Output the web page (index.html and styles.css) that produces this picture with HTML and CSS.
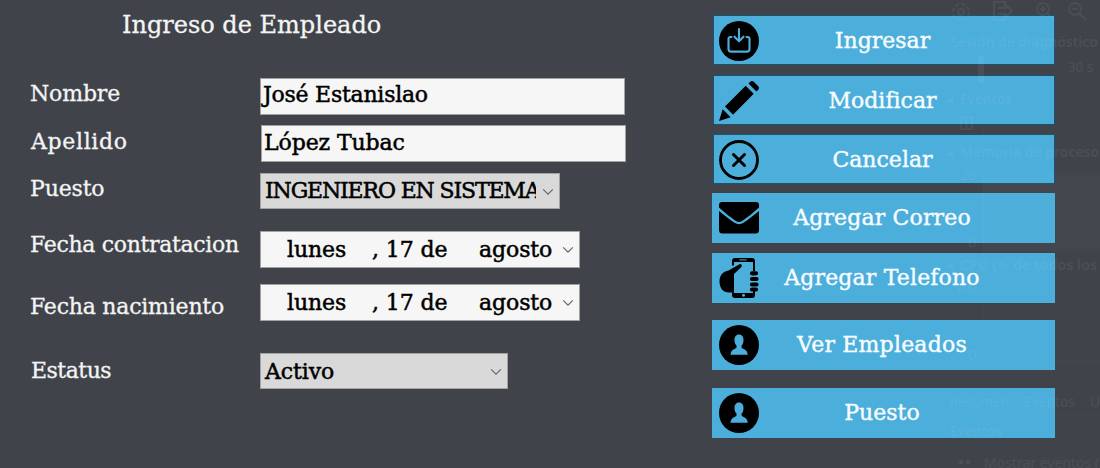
FILE: index.html
```html
<!DOCTYPE html>
<html lang="es">
<head>
<meta charset="utf-8">
<title>Ingreso de Empleado</title>
<link rel="stylesheet" href="styles.css">
</head>
<body>
<svg width="0" height="0" class="defs">
  <symbol id="chev" viewBox="0 0 12 8"><path d="M1.2 1.3 6 6.1 10.8 1.3" fill="none" stroke="#666" stroke-width="1.2"/></symbol>
  <symbol id="user" viewBox="0 0 40 40"><circle cx="20" cy="20" r="20"/><path d="M20 9.500c3 0 4.700 2.500 4.500 5.900c-.1 2.300-.8 4.100-1.900 5.200v2.200c1.500 1.800 5.700 1.300 6.200 7H11.500c.5-5.700 4.500-5.200 6-7v-2.200c-1.100-1.100-1.900-2.900-2-5.200C15.300 12 17 9.500 20 9.500z" fill="#4caedb"/></symbol>
</svg>
<main class="window">
  <form class="form">
    <h1 class="title">Ingreso de Empleado</h1>
    <div class="row nombre"><label>Nombre</label><div class="field"><span>José Estanislao</span></div></div>
    <div class="row apellido"><label>Apellido</label><div class="field"><span>López Tubac</span></div></div>
    <div class="row puesto"><label>Puesto</label><div class="field select"><span class="clip">INGENIERO EN SISTEMA</span><svg class="chev"><use href="#chev"/></svg></div></div>
    <div class="row contrato"><label>Fecha contratacion</label><div class="field date"><span class="day">lunes</span><span class="num">, 17 de</span><span class="month">agosto</span><svg class="chev"><use href="#chev"/></svg></div></div>
    <div class="row nacimiento"><label>Fecha nacimiento</label><div class="field date"><span class="day">lunes</span><span class="num">, 17 de</span><span class="month">agosto</span><svg class="chev"><use href="#chev"/></svg></div></div>
    <div class="row estatus"><label>Estatus</label><div class="field select"><span>Activo</span><svg class="chev"><use href="#chev"/></svg></div></div>
  </form>
  <nav class="actions">
    <button class="btn edged b1"><svg class="icon" viewBox="0 0 40 40"><circle cx="20" cy="20" r="20"/><g fill="none" stroke="#4caedb" stroke-width="2.100" stroke-linecap="round" stroke-linejoin="round"><path d="M12.500 16h-1c-1.300 0-2 .8-2 2v10c0 1.700.9 2.600 2.500 2.600h16c1.600 0 2.500-.9 2.500-2.600V18c0-1.200-.7-2-2-2h-1M20 8v12M15.500 15.700 20 20.200l4.500-4.500"/></g></svg><span>Ingresar</span></button>
    <button class="btn edged b2"><svg class="icon" viewBox="0 0 40 40"><path d="M0 40 3.700 28.300 11.700 36.300zM6 25.500 26.700 4.800 34.700 12.800 14 33.700zM29.500 2.500 31 1c1.300-1.300 2.700-1.300 4 0l4 4c1.300 1.300 1.300 2.700 0 4l-1.600 1.600z"/></svg><span>Modificar</span></button>
    <button class="btn edged b3"><svg class="icon" viewBox="0 0 40 40"><circle cx="20" cy="20" r="18.500" fill="none" stroke="#000" stroke-width="2.800"/><path d="m14.500 14.500 11 11m0-11-11 11" stroke="#000" stroke-width="3" stroke-linecap="round"/></svg><span>Cancelar</span></button>
    <button class="btn b4"><svg class="icon" viewBox="0 0 40 40"><path d="M3 4h34c2 0 3 1.200 3 3v2.500C34 15 27 20.500 23 23c-2 1.200-4 1.200-6 0C13 20.500 6 15 0 9.500V7c0-1.800 1-3 3-3zM0 13c5.500 4.500 10.500 8.500 15.500 11.800 3 1.900 6 1.900 9 0C29.500 21.500 34.500 17.500 40 13v19c0 2.400-1.100 3.500-3.500 3.500h-33C1.100 35.500 0 34.400 0 32z"/></svg><span>Agregar Correo</span></button>
    <button class="btn b5"><svg class="icon" viewBox="0 0 40 40"><path d="M16 0h17c2 0 3 1.100 3 3v10h-2V4H15v3.500h-2V3c0-1.900 1-3 3-3zM13 33.500h2v1.500h19v-2h2v4c0 1.900-1 3-3 3H16c-2 0-3-1.100-3-3z"/><path d="M21 6c1.700 0 2.500 2 1.200 3.300L15 16v18.500H10C4 34.500.5 30 .5 23.500.5 17 4 13.500 9.500 12.500z"/><path d="M33 15.300h4M33 21h4.500M33 26.500h4.500M33 31.500h4" stroke="#000" stroke-width="4.200" stroke-linecap="round"/><path d="M20.500 1.900h7" stroke="#4caedb" stroke-width="1"/><circle cx="24.500" cy="37.300" r="1.500" fill="#4caedb"/></svg><span>Agregar Telefono</span></button>
    <button class="btn b6"><svg class="icon"><use href="#user"/></svg><span>Ver Empleados</span></button>
    <button class="btn b7"><svg class="icon"><use href="#user"/></svg><span>Puesto</span></button>
  </nav>
</main>
<!-- translucent diagnostics panel over the right edge -->
<svg class="ghost" viewBox="930 0 170 468">
  <g fill="none" stroke="#fff" stroke-width="2">
    <circle cx="961" cy="12" r="3"/><circle cx="961" cy="12" r="8" stroke-dasharray="4 2.280"/>
    <path d="M1005 7V2h-11v18h11v-5M998 8h8v-3l6 6-6 6v-3h-8"/>
    <circle cx="1043" cy="9" r="6"/><path d="m1047 13 7 7M1043 6v6M1040 9h6"/><circle cx="1075" cy="9" r="6"/><path d="m1079 13 7 7M1072 9h6"/>
    <path d="M961 117h11v12h-11zM966.500 117v12" stroke-width="1.500"/>
  </g>
  <g fill="#fff">
    <path d="M978 56h6v27h-6zM946 103l7-7v7zM946 156l7-7v7zM946 268l7-7v7z"/>
    <path d="M983 173h117v78H983z" opacity=".35"/><path d="M983 361h117v1.500H983zM936 380h164v1H936zM936 414h164v1H936zM983 83h1v278h-1zM1000 361l4-3 4 3 5-5 5 5z" opacity=".35"/>
    <path d="M958 462l3-3 3 3-3 3zM965 462l3-3 3 3-3 3z"/>
    <g class="strong"><text x="950" y="47" textLength="148" lengthAdjust="spacingAndGlyphs">Sesión de diagnóstico</text><text x="960" y="104" textLength="52" lengthAdjust="spacingAndGlyphs">Eventos</text><text x="960" y="157" textLength="139" lengthAdjust="spacingAndGlyphs">Memoria de proceso</text><text x="960" y="270" textLength="137" lengthAdjust="spacingAndGlyphs">CPU (% de todos los</text><text x="950" y="436" textLength="52" lengthAdjust="spacingAndGlyphs">Eventos</text></g>
    <text x="1068" y="72" textLength="25" lengthAdjust="spacingAndGlyphs">30 s</text><text x="960" y="180" textLength="16">26</text><text x="968" y="247">0</text><text x="954" y="292" textLength="23">100</text><text x="968" y="360">0</text>
    <text x="950" y="407" textLength="59" lengthAdjust="spacingAndGlyphs">Resumen</text><text x="1024" y="407" textLength="51" lengthAdjust="spacingAndGlyphs">Eventos</text><text x="1090" y="407" textLength="10" lengthAdjust="spacingAndGlyphs">U</text><text x="984" y="468" textLength="115" lengthAdjust="spacingAndGlyphs">Mostrar eventos (</text>
  </g>
</svg>
</body>
</html>
```
FILE: styles.css
```css
* { box-sizing: border-box; }
body { margin: 0; width: 1100px; height: 468px; overflow: hidden; background: #40444a; font: 22px "DejaVu Serif", serif; }
.defs { display: block; height: 0; }
.window { display: grid; grid-template-columns: 712px 343px; height: 468px; }
.form { display: flex; flex-direction: column; padding-left: 30px; color: #f4f4f4; -webkit-text-stroke: .3px currentColor; }
.title { font: inherit; font-size: 24px; margin: 9px 0 36px 92px; height: 33px; line-height: 33px; white-space: nowrap; }
.row { display: grid; grid-template-columns: 230px auto; justify-content: start; height: 37px; white-space: nowrap; }
.row label { line-height: 31px; letter-spacing: -.15px; }
.field { display: flex; align-items: flex-start; position: relative; width: 365px; height: 37px; padding-left: 2px; border: 1px solid #a2a2a2; background: #f6f6f6; color: #000; line-height: 31px; letter-spacing: -.1px; -webkit-text-stroke: .5px #000; }
.nombre .field { line-height: 32px; letter-spacing: -.25px; }
.field.select { background: #d9d9d9; height: 36px; padding-left: 4px; }
.chev { position: absolute; right: 5px; top: 14px; width: 12px; height: 8px; }
.clip { width: 271px; overflow: hidden; letter-spacing: -1.15px; }
.apellido { margin-top: 10px; }
.apellido label { padding-left: 1px; letter-spacing: .65px; line-height: 33px; }
.apellido .field { margin-left: 1px; line-height: 33px; }
.puesto { margin-top: 11px; }
.puesto .field { width: 300px; line-height: 34px; }
.contrato { margin-top: 21px; }
.contrato label { line-height: 27px; letter-spacing: -.32px; }
.date { width: 320px; line-height: 33px; }
.contrato .field { line-height: 35px; }
.day { margin-left: 24px; width: 85px; }
.num { width: 107px; }
.nacimiento { margin-top: 16px; }
.nacimiento .field { line-height: 35px; }
.nacimiento label { line-height: 45px; letter-spacing: -.22px; }
.estatus { margin-top: 32px; }
.estatus label { padding-left: 1px; line-height: 36px; letter-spacing: -.5px; }
.estatus .field { width: 248px; line-height: 36px; }
.actions { display: flex; flex-direction: column; padding-top: 15px; }
.btn { display: grid; grid-template-columns: 47px auto; width: 343px; height: 50px; margin: 0 0 10px; padding: 0; border: 0; background: #4caedb; color: #f7fcff; font: inherit; line-height: 50px; -webkit-text-stroke: .4px #f7fcff; }
.btn span { margin-left: -47px; text-align: center; padding-right: 3px; white-space: nowrap; }
.edged { border: 1px solid #1d5270; margin-left: 1px; width: 342px; }
.icon { width: 40px; height: 40px; margin: 5px 0 0 7px; }
.edged .icon { margin: 5px 0 0 5px; }
.b2 { margin-bottom: 9px; }
.b3 { margin-bottom: 9px; }
.b4 { letter-spacing: .15px; }
.b5 { margin-bottom: 17px; letter-spacing: .15px; }
.b6 { margin-bottom: 18px; letter-spacing: .2px; }
.ghost { position: absolute; left: 930px; top: 0; width: 170px; height: 468px; opacity: .055; pointer-events: none; font: 15px "Noto Sans", sans-serif; }
.strong { font-weight: 600; }
```
